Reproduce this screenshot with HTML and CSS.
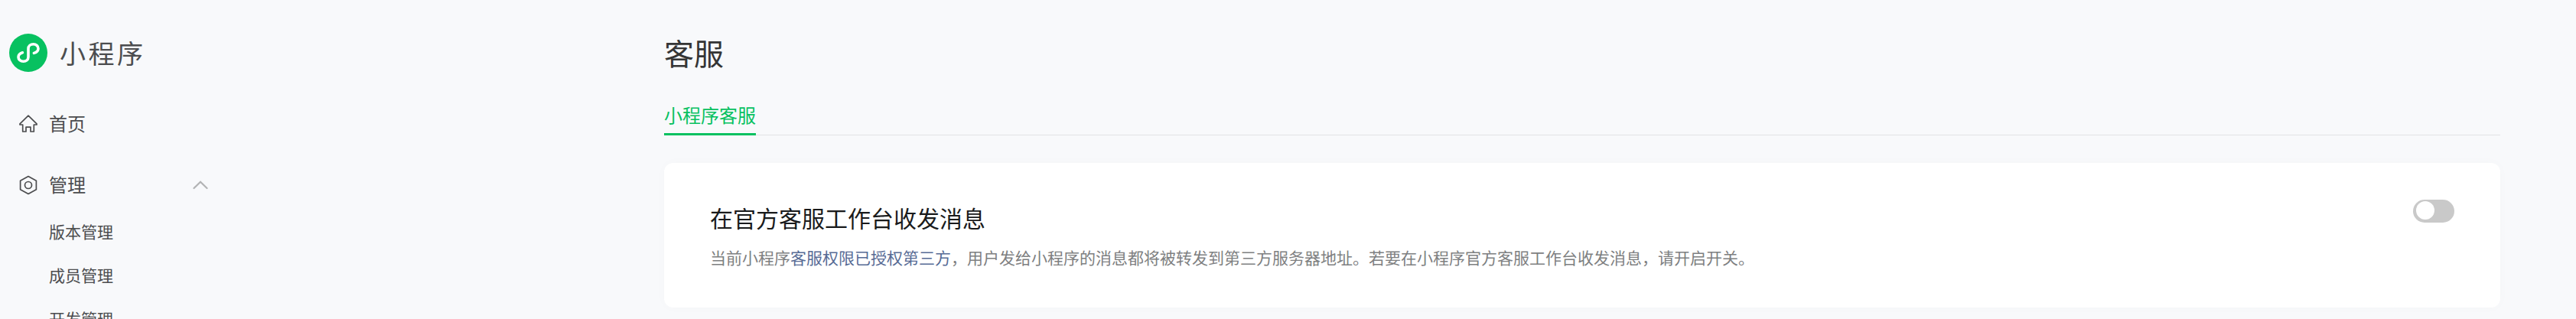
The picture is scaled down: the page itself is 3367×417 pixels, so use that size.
FILE: index.html
```html
<!DOCTYPE html>
<html lang="zh-CN">
<head>
<meta charset="UTF-8" />
<meta name="viewport" content="width=device-width, initial-scale=1" />
<title>小程序 - 客服</title>
<link rel="stylesheet" href="styles.css">
</head>
<body>

<div class="layout">
  <aside class="sidebar">
    <a class="logo">
      <svg class="logo-icon" viewBox="0 0 50 50">
        <circle cx="25" cy="25" r="25" fill="#07c160" />
        <path d="M32.4 25.4C36 24.3 38 22 38 19.4C38 16.2 35.2 13.7 31.6 13.7C28 13.7 25 16.2 25 19.6V30.4C25 33.8 22.2 36.3 18.6 36.3C14.8 36.3 12 33.8 12 30.8C12 28 14 25.8 17.4 24.8" fill="none" stroke="#fff" stroke-width="3.6" stroke-linecap="round" />
      </svg>
      <span class="logo-text">小程序</span>
    </a>

    <nav class="menu">
      <a class="menu-item">
        <svg class="menu-icon" viewBox="0 0 26 26">
          <path d="M13 2.2L24 12.8V14H20.3V23H16V17.2H10V23H5.7V14H2V12.8Z" />
        </svg>
        <span>首页</span>
      </a>
      <a class="menu-item menu-group">
        <svg class="menu-icon" viewBox="0 0 26 26">
          <path d="M13 1.5L23.4 7.2V18.8L13 24.5L2.6 18.8V7.2Z" />
          <circle cx="13" cy="13" r="4.5" />
        </svg>
        <span>管理</span>
        <svg class="arrow" viewBox="0 0 20 12">
          <path d="M1.5 10L10 1.8L18.5 10" />
        </svg>
      </a>
      <div class="submenu">
        <a class="submenu-item">版本管理</a>
        <a class="submenu-item">成员管理</a>
        <a class="submenu-item">开发管理</a>
      </div>
    </nav>
  </aside>

  <main class="main">
    <h2 class="page-title">客服</h2>
    <div class="tabs">
      <a class="tab active">小程序客服</a>
    </div>
    <div class="card">
      <div class="card-info">
        <h3 class="card-title">在官方客服工作台收发消息</h3>
        <p class="card-desc">当前小程序<a class="link">客服权限已授权第三方</a>，用户发给小程序的消息都将被转发到第三方服务器地址。若要在小程序官方客服工作台收发消息，请开启开关。</p>
      </div>
      <div class="switch"><span class="switch-dot"></span></div>
    </div>
  </main>
</div>

</body>
</html>
```

FILE: styles.css
```css
* {
  box-sizing: border-box;
}
body {
  margin: 0;
  height: 417px;
  overflow: hidden;
  background: #f8f9fb;
  font-family: "Noto Sans CJK SC", sans-serif;
  font-weight: 400;
  color: #4c4d4f;
}
.layout {
  display: flex;
  height: 417px;
}
.sidebar {
  width: 868px;
  padding: 44px 0 0 12px;
  overflow: hidden;
}
.logo {
  display: flex;
  align-items: center;
  height: 50px;
}
.logo-icon {
  width: 50px;
  height: 50px;
}
.logo-text {
  margin-left: 16px;
  font-size: 34px;
  line-height: 50px;
  letter-spacing: 3.5px;
}
.menu {
  width: 264px;
  padding: 44px 0 0 12px;
}
.menu-item {
  display: flex;
  align-items: center;
  height: 48px;
  margin-bottom: 32px;
  font-size: 24px;
  line-height: 46px;
}
.menu-icon {
  width: 26px;
  height: 26px;
  margin-right: 14px;
  fill: none;
  stroke: #4c4d4f;
  stroke-width: 1.7;
  stroke-linejoin: round;
}
.menu-item span {
  height: 48px;
}
.menu-group {
  margin-bottom: 8px;
}
.arrow {
  width: 20px;
  height: 12px;
  margin-left: auto;
  margin-right: 4px;
  fill: none;
  stroke: #b2b3b4;
  stroke-width: 2.2;
  stroke-linecap: round;
}
.submenu-item {
  display: block;
  height: 57px;
  padding-left: 40px;
  font-size: 21px;
  line-height: 57px;
}
.main {
  width: 2400px;
  padding-top: 42px;
}
.page-title {
  height: 57px;
  margin: 0;
  font-size: 39px;
  line-height: 53px;
  font-weight: 400;
  color: #353535;
}
.tabs {
  display: flex;
  height: 78px;
  align-items: flex-end;
  border-bottom: 1px solid #e1e3e5;
}
.tab {
  height: 51px;
  margin-bottom: -1px;
  font-size: 24px;
  line-height: 48px;
}
.tab.active {
  color: #07c160;
  border-bottom: 3px solid #07c160;
}
.card {
  display: flex;
  justify-content: space-between;
  height: 189px;
  margin-top: 36px;
  padding: 48px 60px 0;
  background: #fff;
  border-radius: 12px;
  box-shadow: 0 0 15px rgba(0, 0, 0, 0.02);
}
.card-title {
  height: 48px;
  margin: 0;
  font-size: 30px;
  line-height: 46px;
  font-weight: 400;
  color: #1a1b1c;
}
.card-desc {
  margin: 11px 0 0;
  font-size: 21px;
  line-height: 33px;
  color: #7e8081;
}
.link {
  color: #576b95;
}
.switch {
  width: 54px;
  height: 30px;
  padding: 2px 4px;
  border-radius: 15px;
  background: #c9c9c9;
}
.switch-dot {
  display: block;
  width: 24px;
  height: 24px;
  border-radius: 50%;
  background: #fff;
}
```
